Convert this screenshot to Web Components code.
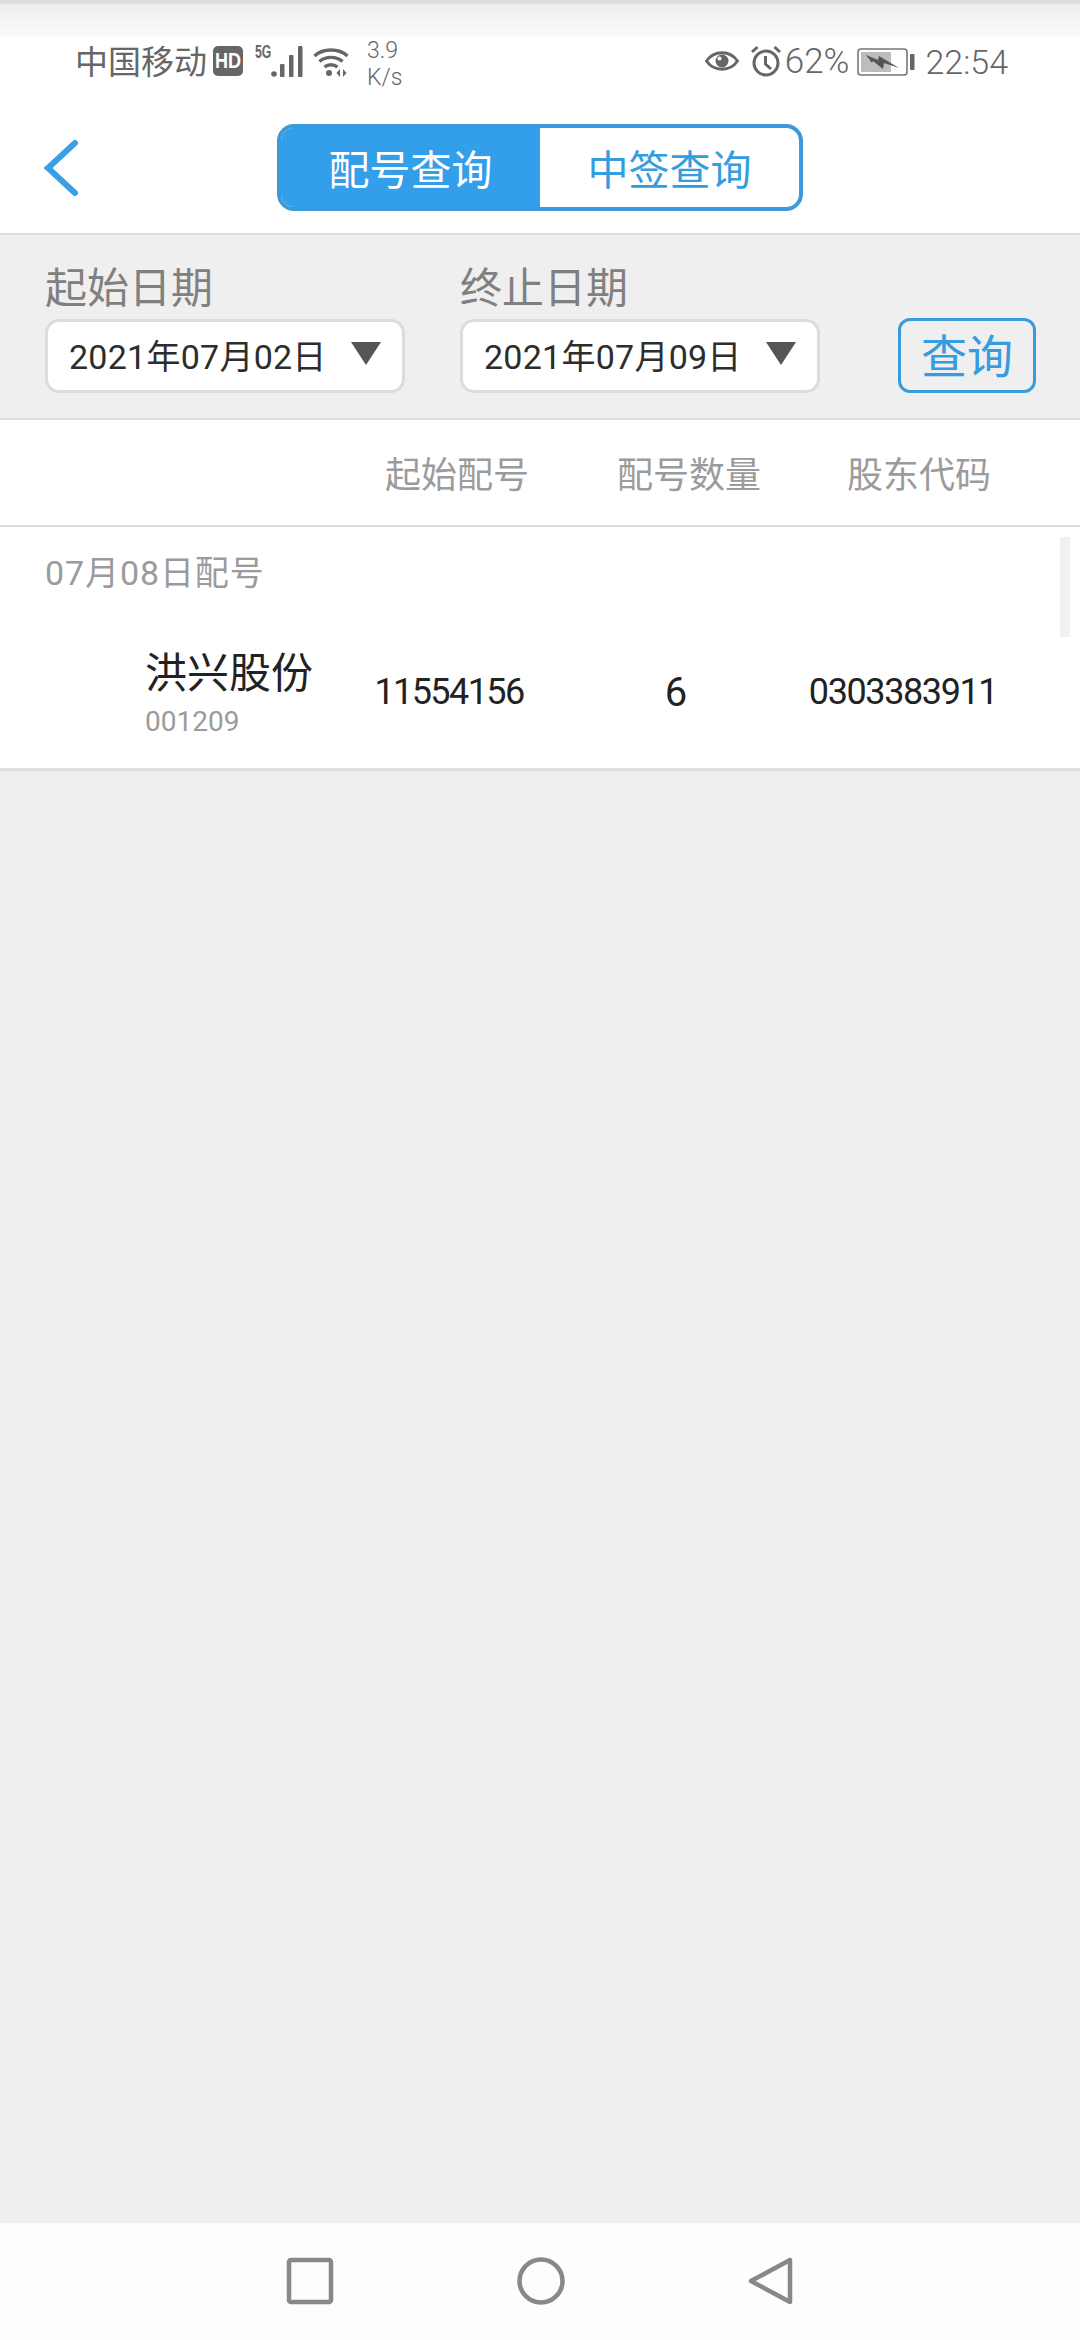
<!DOCTYPE html>
<html lang="zh">
<head>
<meta charset="utf-8">
<title>配号查询</title>
<style>
html, body { margin: 0; padding: 0; background: #efefef; }
body { font-family: Roboto, "Noto Sans CJK SC", sans-serif; }
#app { display: flex; flex-direction: column; width: 1080px; height: 2340px; overflow: hidden; }
</style>
</head>
<body>
<div id="app">
    <status-bar></status-bar>
    <top-header></top-header>
    <date-filter></date-filter>
    <table-head></table-head>
    <peihao-list date="07月08日配号">
        <stock-row name="洪兴股份" code="001209" start="11554156" count="6" account="0303383911"></stock-row>
    </peihao-list>
    <nav-bar></nav-bar>
</div>

<script>
class StatusBar extends HTMLElement {
    constructor() {
        super()
        this.shadowDOM = this.attachShadow({mode : "open"})
    }
    connectedCallback() {
        this.shadowDOM.innerHTML = `
            <style>
            :host {
                display: flex;
                flex: none;
                box-sizing: border-box;
                height: 100px;
                padding: 38px 72px 0 75px;
                justify-content: space-between;
                align-items: flex-start;
                color: #666;
                background: linear-gradient(#dcdcdc 0, #dcdcdc 3px, #efefef 5px, #fafafa 36px, #fff 38px);
                font-family: Roboto, "Noto Sans CJK SC", sans-serif;
            }
            .side { display: flex; align-items: flex-start; }
            svg { display: block; flex: none; }
            .carrier { font-size: 33px; line-height: 50px; margin-right: 6px; }
            .hd {
                width: 30px; height: 30px;
                margin: 8px 12px 0 0;
                background: #666;
                border-radius: 5px;
                color: #fff;
                font: 700 22px/30px "Liberation Sans", sans-serif;
                text-align: center;
            }
            .hd b { display: inline-block; transform: scaleX(.82); margin-left: -3px; width: 36px; }
            .fiveg {
                width: 16px;
                margin-top: 6px;
                font: 700 18px/16px "Liberation Sans", sans-serif;
                transform: scaleX(.68);
                transform-origin: left;
                white-space: nowrap;
            }
            .speed {
                margin: -1px 0 0 18px;
                font-size: 23px;
                line-height: 27px;
                font-weight: 300;
            }
            .num { font-size: 35px; line-height: 48px; font-weight: 300; }
            </style>
            <div class="side">
                <span class="carrier">中国移动</span>
                <span class="hd"><b>HD</b></span>
                <span class="fiveg">5G</span>
                <svg width="33" height="31" viewBox="0 0 33 31" style="margin-top:8px">
                    <circle cx="3" cy="28" r="2.800" fill="#666"/>
                    <rect x="9" y="18" width="4.500" height="13" rx="1" fill="#666"/>
                    <rect x="18" y="9" width="4.500" height="22" rx="1" fill="#666"/>
                    <rect x="27" y="0" width="4.500" height="31" rx="1" fill="#666"/>
                </svg>
                <svg width="36" height="30" viewBox="0 0 36 30" style="margin:9px 0 0 9px" fill="none" stroke="#666" stroke-width="3.400">
                    <path d="M1.500 9 C10 1 26 1 34.500 9"/>
                    <path d="M6.500 14.500 C12.500 9 23.500 9 29.500 14.500"/>
                    <path d="M11.500 20 C15 17 21 17 24.500 20"/>
                    <circle cx="16" cy="26" r="3" fill="#666" stroke="none"/>
                    <path d="M27 22 l-3.500 4 3.500 4z M30 22 l3.500 4 -3.500 4z" fill="#666" stroke="none"/>
                </svg>
                <span class="speed">3.9<br>K/s</span>
            </div>
            <div class="side">
                <svg width="34" height="24" viewBox="0 0 34 24" style="margin-top:11px" fill="none" stroke="#666" stroke-width="3">
                    <path d="M1.500 12 C9 1 25 1 32.500 12 C25 23 9 23 1.500 12z"/>
                    <circle cx="17" cy="12" r="6.500" fill="#666" stroke="none"/>
                    <circle cx="14.500" cy="9.500" r="2" fill="#fff" stroke="none"/>
                </svg>
                <svg width="32" height="32" viewBox="0 0 32 32" style="margin:7px 3px 0 11px" fill="none" stroke="#666" stroke-width="3">
                    <circle cx="16" cy="18" r="12"/>
                    <path d="M15.500 11 V19 L21 24"/>
                    <path d="M2 7 L7.500 2 M30 7 L24.500 2"/>
                </svg>
                <span class="num">62%</span>
                <svg width="58" height="28" viewBox="0 0 58 28" style="margin:10px 10px 0 8px">
                    <rect x="1" y="1" width="49" height="26" rx="3" fill="none" stroke="#777" stroke-width="1.600"/>
                    <rect x="4" y="4" width="30" height="20" fill="#bdbdbd"/>
                    <rect x="53" y="6" width="4.500" height="16" rx="1" fill="#666"/>
                    <path d="M9 7 L21 12 L22 8 L42 20 L27 15 L26 21 L16 13 L15 15z" fill="#555"/>
                </svg>
                <span class="num" style="font-size:34px">22:54</span>
            </div>
        `
    }
}
customElements.define("status-bar", StatusBar)

class SegmentTabs extends HTMLElement {
    constructor() {
        super()
        this.shadowDOM = this.attachShadow({mode : "open"})
    }
    connectedCallback() {
        this.shadowDOM.innerHTML = `
            <style>
            :host {
                display: flex;
                box-sizing: border-box;
                width: 526px;
                height: 87px;
                border: 4px solid #3a9bdc;
                border-radius: 17px;
                overflow: hidden;
                font: 41px/79px "Noto Sans CJK SC", sans-serif;
                color: #339ddf;
                background: #fff;
            }
            div { flex: 1; text-align: center; }
            .on { background: #339eea; color: #fff; }
            </style>
            <div class="on">配号查询</div>
            <div>中签查询</div>
        `
    }
}
customElements.define("segment-tabs", SegmentTabs)

class TopHeader extends HTMLElement {
    constructor() {
        super()
        this.shadowDOM = this.attachShadow({mode : "open"})
    }
    connectedCallback() {
        this.shadowDOM.innerHTML = `
            <style>
            :host {
                display: flex;
                flex: none;
                box-sizing: border-box;
                height: 135px;
                padding: 24px 0 0 43px;
                background: #fff;
                border-bottom: 2px solid #dedede;
                align-items: flex-start;
            }
            svg { display: block; margin: 14px 198px 0 0; }
            </style>
            <svg width="36" height="60" viewBox="0 0 36 60" fill="none" stroke="#3a9fe6" stroke-width="6" stroke-linecap="round" stroke-linejoin="miter">
                <path d="M32 5 L5 30 L32 55"/>
            </svg>
            <segment-tabs></segment-tabs>
        `
    }
}
customElements.define("top-header", TopHeader)

class DateSelect extends HTMLElement {
    constructor() {
        super()
        this.shadowDOM = this.attachShadow({mode : "open"})
    }
    connectedCallback() {
        this.shadowDOM.innerHTML = `
            <style>
            :host { display: block; width: 360px; }
            .label {
                font: 42px/50px "Noto Sans CJK SC", sans-serif;
                color: #808080;
                margin-bottom: 9px;
            }
            .box {
                display: flex;
                box-sizing: border-box;
                height: 74px;
                padding: 0 21px 0 21px;
                align-items: center;
                justify-content: space-between;
                background: #fff;
                border: 3px solid #dcdcdc;
                border-radius: 14px;
                font: 34px/60px Roboto, "Noto Sans CJK SC", sans-serif;
                letter-spacing: .25px;
                color: #2d2d2d;
            }
            span { position: relative; top: 1px; }
            svg { display: block; margin-top: -6px; }
            </style>
            <div class="label">${this.getAttribute("label")}</div>
            <div class="box">
                <span><slot></slot></span>
                <svg width="30" height="23" viewBox="0 0 30 23"><path d="M0 0 H30 L15 23z" fill="#555"/></svg>
            </div>
        `
    }
}
customElements.define("date-select", DateSelect)

class DateFilter extends HTMLElement {
    constructor() {
        super()
        this.shadowDOM = this.attachShadow({mode : "open"})
    }
    connectedCallback() {
        this.shadowDOM.innerHTML = `
            <style>
            :host {
                display: flex;
                flex: none;
                box-sizing: border-box;
                height: 185px;
                padding: 25px 0 0 45px;
                background: #efefef;
                border-bottom: 2px solid #dcdcdc;
                align-items: flex-start;
            }
            date-select + date-select { margin-left: 55px; }
            button {
                box-sizing: border-box;
                width: 138px;
                height: 75px;
                margin: 58px 0 0 78px;
                padding: 0 0 5px;
                background: transparent;
                border: 3px solid #3a9bdc;
                border-radius: 12px;
                font: 46px/60px "Noto Sans CJK SC", sans-serif;
                color: #339ddf;
            }
            </style>
            <date-select label="起始日期">2021年07月02日</date-select>
            <date-select label="终止日期">2021年07月09日</date-select>
            <button>查询</button>
        `
    }
}
customElements.define("date-filter", DateFilter)

class TableHead extends HTMLElement {
    constructor() {
        super()
        this.shadowDOM = this.attachShadow({mode : "open"})
    }
    connectedCallback() {
        this.shadowDOM.innerHTML = `
            <style>
            :host {
                display: grid;
                flex: none;
                box-sizing: border-box;
                height: 107px;
                padding: 0 0 2px 347px;
                grid-template-columns: 220px 244px 216px;
                align-items: center;
                text-align: center;
                background: #fff;
                border-bottom: 2px solid #dcdcdc;
                font: 36px/50px "Noto Sans CJK SC", sans-serif;
                color: #9b9b9b;
            }
            </style>
            <span>起始配号</span>
            <span>配号数量</span>
            <span>股东代码</span>
        `
    }
}
customElements.define("table-head", TableHead)

class PeihaoList extends HTMLElement {
    constructor() {
        super()
        this.shadowDOM = this.attachShadow({mode : "open"})
    }
    connectedCallback() {
        this.shadowDOM.innerHTML = `
            <style>
            :host {
                display: block;
                flex: 1;
                position: relative;
                background: #efefef;
            }
            .card {
                background: #fff;
                border-bottom: 3px solid #dedede;
            }
            .date {
                height: 94px;
                box-sizing: border-box;
                padding: 21px 0 0 45px;
                font: 34px/50px Roboto, "Noto Sans CJK SC", sans-serif;
                letter-spacing: .9px;
                color: #9b9b9b;
            }
            /* scroll indicator sits over the card */
            .thumb {
                position: absolute;
                top: 10px;
                right: 10px;
                width: 10px;
                height: 100px;
                background: #f1f1f1;
            }
            </style>
            <div class="card">
                <div class="date">${this.getAttribute("date")}</div>
                <slot></slot>
            </div>
            <div class="thumb"></div>
        `
    }
}
customElements.define("peihao-list", PeihaoList)

class StockRow extends HTMLElement {
    constructor() {
        super()
        this.shadowDOM = this.attachShadow({mode : "open"})
    }
    connectedCallback() {
        const a = n => this.getAttribute(n)
        this.shadowDOM.innerHTML = `
            <style>
            :host {
                display: grid;
                box-sizing: border-box;
                height: 147px;
                padding: 0 0 5px 145px;
                grid-template-columns: 204px 200px 254px 200px;
                align-items: center;
                color: #222;
                font-family: Roboto, "Noto Sans CJK SC", sans-serif;
            }
            .stock { margin-bottom: 2px; }
            .name { font: 42px/50px "Noto Sans CJK SC", sans-serif; }
            .code { font-size: 28px; line-height: 32px; color: #9b9b9b; margin-top: 11px; }
            .val { text-align: center; font-size: 36px; letter-spacing: -1.600px; }
            .count { font-size: 40px; letter-spacing: 0; }
            .account { letter-spacing: -1.400px; }
            </style>
            <div class="stock">
                <div class="name">${a("name")}</div>
                <div class="code">${a("code")}</div>
            </div>
            <div class="val">${a("start")}</div>
            <div class="val count">${a("count")}</div>
            <div class="val account">${a("account")}</div>
        `
    }
}
customElements.define("stock-row", StockRow)

class NavBar extends HTMLElement {
    constructor() {
        super()
        this.shadowDOM = this.attachShadow({mode : "open"})
    }
    connectedCallback() {
        this.shadowDOM.innerHTML = `
            <style>
            :host {
                display: flex;
                flex: none;
                box-sizing: border-box;
                height: 117px;
                padding-top: 34px;
                justify-content: center;
                align-items: flex-start;
                gap: 183px;
                background: #fdfdfd;
            }
            svg { display: block; }
            </style>
            <svg width="48" height="48" viewBox="0 0 48 48" fill="none" stroke="#888" stroke-width="4.500" stroke-linejoin="round">
                <rect x="3" y="3" width="42" height="42" rx="2"/>
            </svg>
            <svg width="48" height="48" viewBox="0 0 48 48" fill="none" stroke="#888" stroke-width="4.500">
                <circle cx="24" cy="24" r="21.500"/>
            </svg>
            <svg width="46" height="48" viewBox="0 0 46 48" fill="none" stroke="#888" stroke-width="4.500" stroke-linejoin="round">
                <path d="M42 3 V45 L3 24z"/>
            </svg>
        `
    }
}
customElements.define("nav-bar", NavBar)
</script>
</body>
</html>
